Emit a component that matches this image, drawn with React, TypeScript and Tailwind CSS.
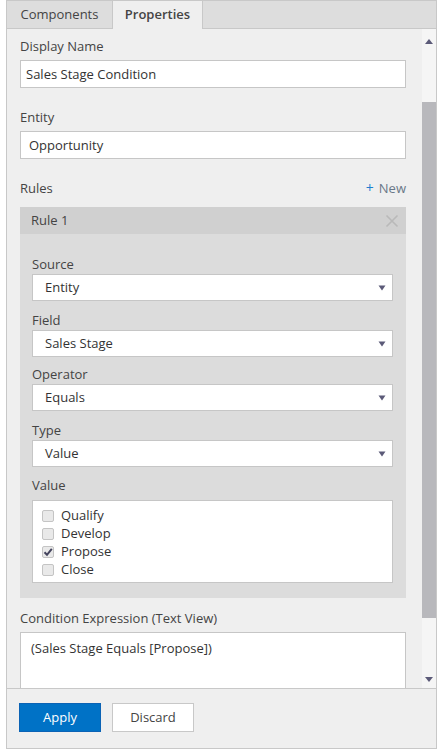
import React from "react";

const font = { fontFamily: '"Open Sans", "Noto Sans", sans-serif' };

function Caret() {
  return (
    <svg width="8" height="6" viewBox="0 0 8 6" className="shrink-0">
      <path d="M0.5 0.5 L7.5 0.5 L4 5.5 Z" fill="#5b5a78" />
    </svg>
  );
}

function Select({ value }: { value: string }) {
  return (
    <div className="flex h-[27px] items-center justify-between border border-[#c6c6c6] bg-white pl-[12px] pr-[6px] text-[13px] text-[#333]">
      <span>{value}</span>
      <Caret />
    </div>
  );
}

function Field({ label, value, top }: { label: string; value: string; top: string }) {
  return (
    <div className={top}>
      <div className="h-[20px] text-[13px] leading-[20px] text-[#444]">{label}</div>
      <Select value={value} />
    </div>
  );
}

function Check({ label, checked }: { label: string; checked?: boolean }) {
  return (
    <div className="flex h-[18px] items-center gap-[7px] text-[13px] text-[#333]">
      <span className="flex h-[12px] w-[12px] items-center justify-center rounded-[2px] border border-[#c4c4c4] bg-[#e9e9e9]">
        {checked && (
          <svg width="10" height="10" viewBox="0 0 10 10">
            <path d="M1.5 5.2 L4 7.8 L8.8 1.8" stroke="#44445e" strokeWidth="2" fill="none" />
          </svg>
        )}
      </span>
      <span>{label}</span>
    </div>
  );
}

export default function App() {
  return (
    <div className="bg-white" style={font}>
      <div className="ml-[6px] flex h-[749px] w-[431px] flex-col border border-[#c8c8c8] bg-[#efefef]">
        {/* tabs */}
        <div className="flex h-[28px] shrink-0 border-b border-[#c8c8c8] bg-[#dddddd] text-[13px] text-[#444]">
          <div className="flex w-[105px] items-center justify-center">Components</div>
          <div className="mb-[-1px] flex w-[91px] items-center justify-center border-x border-[#c8c8c8] bg-[#efefef] font-semibold">
            Properties
          </div>
        </div>

        {/* scroll area */}
        <div className="flex min-h-0 flex-1">
          <div className="min-w-0 flex-1 overflow-hidden pl-[13px] pr-[16px]">
            <div className="mt-[7px] h-[20px] text-[13px] leading-[20px] text-[#444]">Display Name</div>
            <div className="mt-[4px] flex h-[28px] items-center border border-[#c6c6c6] bg-white pl-[5px] pt-[1px] text-[13px] text-[#333]">
              Sales Stage Condition
            </div>

            <div className="mt-[19px] h-[20px] text-[13px] leading-[20px] text-[#444]">Entity</div>
            <div className="mt-[4px] flex h-[28px] items-center border border-[#c6c6c6] bg-white pl-[8px] pt-[1px] text-[13px] text-[#333]">
              Opportunity
            </div>

            <div className="mt-[19px] flex h-[20px] items-center justify-between text-[13px] leading-[20px]">
              <span className="text-[#444]">Rules</span>
              <span className="flex items-center gap-[5px] text-[#6a7888]">
                <span className="text-[14px] text-[#1f7ed0]">+</span>
                <span>New</span>
              </span>
            </div>

            <div className="mt-[9px] bg-[#dcdcdc] pb-[15px]">
              <div className="flex h-[27px] items-center justify-between bg-[#d0d0d0] pl-[11px] pr-[7px] text-[13px] text-[#444]">
                <span>Rule 1</span>
                <svg width="14" height="14" viewBox="0 0 14 14">
                  <path d="M1.5 1.5 L12.5 12.5 M12.5 1.5 L1.5 12.5" stroke="#b9b9b9" strokeWidth="1.6" />
                </svg>
              </div>
              <div className="pl-[12px] pr-[13px]">
                <Field label="Source" value="Entity" top="mt-[20px]" />
                <Field label="Field" value="Sales Stage" top="mt-[9px]" />
                <Field label="Operator" value="Equals" top="mt-[7px]" />
                <Field label="Type" value="Value" top="mt-[9px]" />
                <div className="mt-[8px] h-[20px] text-[13px] leading-[20px] text-[#444]">Value</div>
                <div className="mt-[5px] h-[83px] border border-[#c6c6c6] bg-white pl-[9px] pt-[6px]">
                  <Check label="Qualify" />
                  <Check label="Develop" />
                  <Check label="Propose" checked />
                  <Check label="Close" />
                </div>
              </div>
            </div>

            <div className="mt-[10px] h-[20px] text-[13px] leading-[20px] text-[#444]">Condition Expression (Text View)</div>
            <div className="mt-[4px] h-[80px] border border-[#c6c6c6] bg-white pl-[10px] pt-[6px] text-[13px] text-[#333]">
              (Sales Stage Equals [Propose])
            </div>
          </div>

          {/* scrollbar */}
          <div className="flex w-[14px] shrink-0 flex-col bg-[#f5f5f5]">
            <div className="flex h-[17px] items-end justify-center pb-[2px]">
              <svg width="8" height="5" viewBox="0 0 8 5">
                <path d="M0 5 L8 5 L4 0 Z" fill="#5b5a78" />
              </svg>
            </div>
            <div className="mt-[56px] h-[516px] bg-[#b8b8bc]" />
            <div className="flex flex-1 items-end justify-center pb-[6px]">
              <svg width="8" height="5" viewBox="0 0 8 5">
                <path d="M0 0 L8 0 L4 5 Z" fill="#5b5a78" />
              </svg>
            </div>
          </div>
        </div>

        {/* footer */}
        <div className="flex h-[60px] shrink-0 items-start gap-[11px] border-t border-[#c8c8c8] bg-[#efefef] pl-[12px] pt-[14px]">
          <button className="h-[29px] w-[82px] border border-[#0b63b5] bg-[#0072c6] text-[13px] text-white">Apply</button>
          <button className="h-[29px] w-[82px] border border-[#c8c8c8] bg-white text-[13px] text-[#444]">Discard</button>
        </div>
      </div>
    </div>
  );
}
